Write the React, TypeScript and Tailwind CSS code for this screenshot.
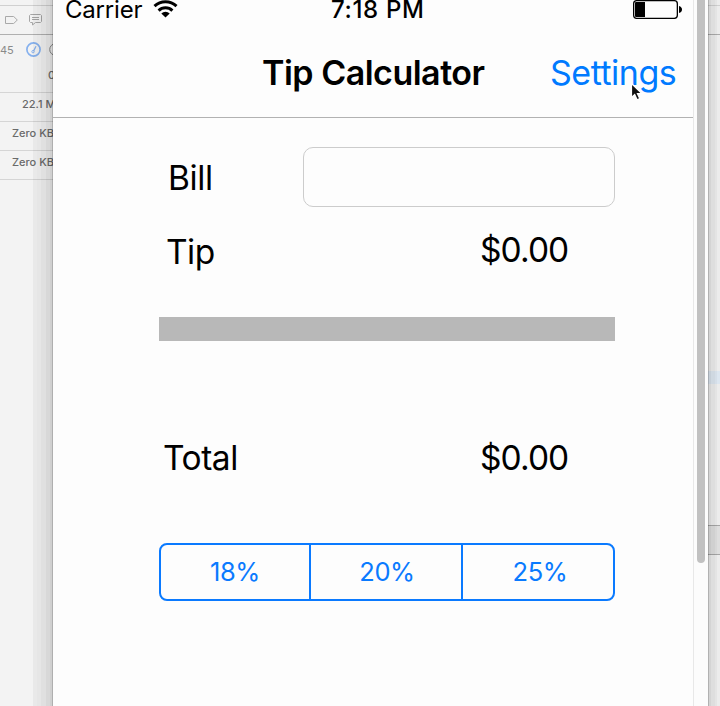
import React from "react";

const label = "whitespace-nowrap text-[33.5px] leading-[40px] text-black";

function Sidebar() {
  return (
    <aside className="relative h-full w-[53px] shrink-0 overflow-hidden bg-[#f3f3f3] text-[11px] font-medium leading-[14px] text-[#6a6a6a]">
      <div className="h-[6px] border-b border-[#d0d0d0]" />
      <div className="flex h-[29px] items-center border-b border-[#b0b0b0] pl-[5px]">
        <svg className="h-[8px] w-[13px] shrink-0" viewBox="0 0 13 8" fill="none" stroke="#a9a9a9">
          <path d="M.5.5h8.2L12.3 4 8.700 7.500H.5z" />
        </svg>
        <svg className="ml-[11px] h-[12px] w-[13px] shrink-0" viewBox="0 0 13 12" fill="none" stroke="#a6a6a6">
          <path d="M1.500.5h10l1 1v6l-1 1h-5L3.500 11V8.500h-2l-1-1v-6zM3 3.500h7M3 5.500h7" />
        </svg>
      </div>
      <div className="h-[58px] border-b border-[#d5d5d5]">
        <div className="flex h-[29px] items-center">
          <span className="w-[18px] shrink-0 text-[11px] font-normal text-[#8a8a8a]">45</span>
          <svg className="ml-[8px] h-[16px] w-[15px] shrink-0" viewBox="0 0 15 16" fill="none" stroke="#86b1ee">
            <circle cx="7.500" cy="7.500" r="6.600" strokeWidth="1.700" />
            <path d="M10 4.300 7.600 9" strokeWidth="1.300" />
            <circle cx="7" cy="9.700" r="1.200" />
          </svg>
          <svg className="ml-[8px] h-[13px] w-[13px] shrink-0" viewBox="0 0 13 13" fill="none" stroke="#858585">
            <circle cx="6.500" cy="6.500" r="5.800" />
          </svg>
        </div>
        <div className="pl-[48px] pt-[4px]">0</div>
      </div>
      <div className="h-[29px] whitespace-nowrap border-b border-[#d5d5d5] pl-[22px] pt-[4px]">22.1 MB</div>
      <div className="h-[29px] whitespace-nowrap border-b border-[#d5d5d5] pl-[12px] pt-[4px]">Zero KB</div>
      <div className="h-[29px] whitespace-nowrap border-b border-[#d5d5d5] pl-[12px] pt-[4px]">Zero KB</div>
      <div className="absolute inset-y-0 right-0 flex">
        <i className="w-[4px] bg-black/[0.04]" />
        <i className="w-[4px] bg-black/[0.05]" />
        <i className="w-[5px] bg-black/[0.08]" />
        <i className="w-[4px] bg-black/[0.11]" />
        <i className="w-[2px] bg-black/[0.14]" />
        <i className="w-px bg-black/[0.28]" />
      </div>
    </aside>
  );
}

function StatusBar() {
  return (
    <div className="flex h-[20px] items-center text-[24px] text-black">
      <span className="ml-[12px] w-[78px] whitespace-nowrap leading-[30px] tracking-[-0.2px]">Carrier</span>
      <svg className="ml-[10px] h-[20px] w-[26px]" viewBox="0 0 26 20" fill="none" stroke="#000" strokeWidth="3">
        <path d="M1.500 6.200a16 16 0 0 1 22 0M5.600 10.600a10 10 0 0 1 13.800 0" />
        <path d="M8.300 13.400a6 6 0 0 1 8.400 0L12.500 17.600z" fill="#000" stroke="none" />
      </svg>
      <span className="ml-[152px] w-[94px] whitespace-nowrap font-medium leading-[30px] tracking-[0.65px]">7:18 PM</span>
      <svg className="ml-[208px] h-[20px] w-[49px]" viewBox="0 0 49 20">
        <rect x=".65" y=".65" width="43.700" height="17.700" rx="3" fill="none" stroke="#000" strokeWidth="1.300" />
        <path d="M3 2h9v15H3a1 1 0 0 1-1-1V3a1 1 0 0 1 1-1zM46 6q3 1 3 3.500T46 13z" />
      </svg>
    </div>
  );
}

export default function App() {
  return (
    <div className="flex h-[706px] w-[720px] overflow-hidden bg-[#fdfdfd] font-['Inter',sans-serif]">
      <Sidebar />
      <main className="h-full w-[640px] shrink-0 overflow-hidden">
        <header className="h-[118px] border-b border-[#b2b2b2]">
          <StatusBar />
          <div className="flex pt-[33px]">
            <h1 className="ml-[209px] w-[223px] whitespace-nowrap text-[34px] font-semibold leading-[40px] tracking-[-0.5px] text-black">Tip Calculator</h1>
            <div className="relative ml-[65px]">
              <button className="whitespace-nowrap text-[34px] leading-[40px] tracking-[-0.5px] text-[#007aff]">Settings</button>
              <svg className="absolute left-[80px] top-[29px] h-[20px] w-[14px]" viewBox="0 0 14 20">
                <path d="M1.500 1.500v14l3.200-3 2.400 5.300 2.600-1.200-2.300-5h4.400z" fill="#111" stroke="#fff" strokeWidth="1.200" />
              </svg>
            </div>
          </div>
        </header>
        <div className="ml-[106px] w-[456px] pt-[29px]">
          <div className="flex h-[60px]">
            <label className={label + " ml-[9px] w-[135px] pt-[11px] tracking-[-0.4px]"}>Bill</label>
            <input className="h-[60px] w-[312px] rounded-[10px] border border-[#cccccc] bg-[#fdfdfd]" />
          </div>
          <div className="flex h-[110px] pl-[7px] pt-[23px]">
            <span className={label + " w-[314px] pt-[2px] tracking-[-0.5px]"}>Tip</span>
            <span className={label + " tracking-[-0.9px]"}>$0.00</span>
          </div>
          <div className="h-[24px] bg-[#b8b8b8]" />
          <div className="flex h-[202px] pl-[4px] pt-[97px]">
            <span className={label + " w-[317px] tracking-[-0.45px]"}>Total</span>
            <span className={label + " tracking-[-0.9px]"}>$0.00</span>
          </div>
          <div className="flex h-[58px] divide-x-2 divide-[#0a7aff] rounded-[8px] border-2 border-[#0a7aff] text-[25.5px] tracking-[-0.4px] text-[#0a7aff]">
            <button className="w-[150px]">18%</button>
            <button className="w-[152px] pl-[2px]">20%</button>
            <button className="w-[150px] pl-[4px]">25%</button>
          </div>
        </div>
      </main>
      <div className="h-full w-[15px] shrink-0 border-l border-[#e8e8e8] bg-[#fcfcfc] pl-[3px]">
        <div className="h-[563px] w-[8px] rounded-b-full bg-[#c1c1c1]" />
      </div>
      <aside className="relative h-full w-[12px] shrink-0 bg-[#ececec]">
        <div className="h-[6px] border-b border-[#cfcfcf]" />
        <div className="h-[29px] border-b border-[#aaaaaa]" />
        <div className="h-[336px]" />
        <div className="h-[13px] bg-[#dce6f0]" />
        <div className="h-[141px]" />
        <div className="h-[30px] border-y border-[#a5a5a5] bg-[#dedede]" />
        <div className="absolute inset-0 flex">
          <i className="w-px bg-black/25" />
          <i className="w-[2px] bg-black/10" />
          <i className="w-[4px] bg-black/[0.06]" />
          <i className="w-[2px] bg-black/[0.03]" />
        </div>
      </aside>
    </div>
  );
}
